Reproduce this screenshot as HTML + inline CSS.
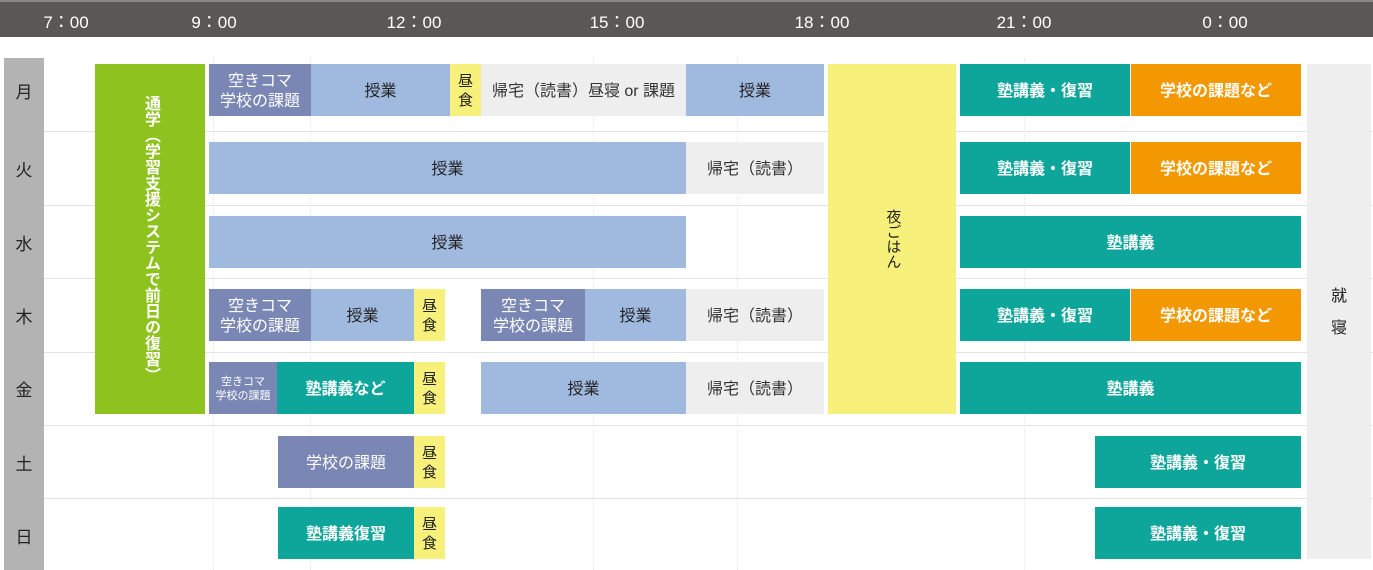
<!DOCTYPE html><html><head><meta charset="utf-8"><style>
body{margin:0;width:1373px;height:570px;position:relative;overflow:hidden;background:#fff;font-family:"Liberation Sans","Noto Sans CJK JP",sans-serif}
.a{position:absolute;display:flex;align-items:center;justify-content:center;text-align:center;box-sizing:border-box;line-height:1.25;padding-top:3px}
.hd{position:absolute;left:0;top:0;width:1373px;height:37px;background:#5a5757;border-top:2px solid #8a8888;box-sizing:border-box}
.t{position:absolute;top:8px;color:#fff;font-size:17px;width:90px;text-align:center;margin-left:-45px}
.s{background:#7a86b4;color:#fff;font-size:16px}
.b{background:#a0b9df;color:#222;font-size:16px}
.y{background:#f7f07a;color:#222;font-size:15px}
.g{background:#eeeeee;color:#333;font-size:16px}
.tl{background:#0ea59b;color:#fff;font-size:16px;font-weight:bold}
.o{background:#f39800;color:#fff;font-size:16px;font-weight:bold}
.d{position:absolute;left:4px;width:40px;color:#222;font-size:17px;text-align:center}
.ln{position:absolute;left:44px;width:1329px;height:1px;background:#e3e3e3}
.v{position:absolute;top:58px;height:512px;border-left:1px dotted #e6e6e6}
</style></head><body>
<div class="hd"></div>
<div class="t" style="left:66px">7：00</div><div class="t" style="left:214px">9：00</div><div class="t" style="left:414px">12：00</div><div class="t" style="left:617px">15：00</div><div class="t" style="left:822px">18：00</div><div class="t" style="left:1024px">21：00</div><div class="t" style="left:1225px">0：00</div>
<div style="position:absolute;left:4px;top:58px;width:40px;height:512px;background:#b3b3b3"></div>
<div class="v" style="left:213px"></div><div class="v" style="left:310px"></div><div class="v" style="left:593px"></div><div class="v" style="left:737px"></div><div class="v" style="left:1024px"></div>
<div class="ln" style="top:131px"></div><div class="ln" style="top:205px"></div><div class="ln" style="top:278px"></div><div class="ln" style="top:352px"></div><div class="ln" style="top:425px"></div><div class="ln" style="top:498px"></div>
<div class="d" style="top:78px">月</div><div class="d" style="top:156px">火</div><div class="d" style="top:230px">水</div><div class="d" style="top:303px">木</div><div class="d" style="top:376px">金</div><div class="d" style="top:450px">土</div><div class="d" style="top:523px">日</div>
<div class="a" style="left:95px;top:64px;width:110px;height:350px;background:#8dc21f;color:#fff;font-size:16px;font-weight:bold;writing-mode:vertical-rl;padding:0">通学（学習支援システムで前日の復習）</div>
<div class="a" style="left:828px;top:64px;width:128px;height:350px;background:#f7f07a;color:#222;font-size:15px;writing-mode:vertical-rl;padding:0">夜ごはん</div>
<div class="a" style="left:1307px;top:64px;width:64px;height:495px;background:#eeeeee;color:#222;font-size:16px;line-height:2">就<br>寝</div>
<div class="a s" style="left:209px;top:64px;width:102px;height:52px">空きコマ<br>学校の課題</div>
<div class="a b" style="left:311px;top:64px;width:139px;height:52px">授業</div>
<div class="a y" style="left:450px;top:64px;width:31px;height:52px">昼<br>食</div>
<div class="a g" style="left:481px;top:64px;width:205px;height:52px">帰宅（読書）昼寝 or 課題</div>
<div class="a b" style="left:686px;top:64px;width:138px;height:52px">授業</div>
<div class="a tl" style="left:960px;top:64px;width:170px;height:52px">塾講義・復習</div>
<div class="a o" style="left:1131px;top:64px;width:170px;height:52px">学校の課題など</div>
<div class="a b" style="left:209px;top:142px;width:477px;height:52px">授業</div>
<div class="a g" style="left:686px;top:142px;width:138px;height:52px">帰宅（読書）</div>
<div class="a tl" style="left:960px;top:142px;width:170px;height:52px">塾講義・復習</div>
<div class="a o" style="left:1131px;top:142px;width:170px;height:52px">学校の課題など</div>
<div class="a b" style="left:209px;top:216px;width:477px;height:52px">授業</div>
<div class="a tl" style="left:960px;top:216px;width:341px;height:52px">塾講義</div>
<div class="a s" style="left:209px;top:289px;width:102px;height:52px">空きコマ<br>学校の課題</div>
<div class="a b" style="left:311px;top:289px;width:103px;height:52px">授業</div>
<div class="a y" style="left:414px;top:289px;width:31px;height:52px">昼<br>食</div>
<div class="a s" style="left:481px;top:289px;width:104px;height:52px">空きコマ<br>学校の課題</div>
<div class="a b" style="left:585px;top:289px;width:101px;height:52px">授業</div>
<div class="a g" style="left:686px;top:289px;width:138px;height:52px">帰宅（読書）</div>
<div class="a tl" style="left:960px;top:289px;width:170px;height:52px">塾講義・復習</div>
<div class="a o" style="left:1131px;top:289px;width:170px;height:52px">学校の課題など</div>
<div class="a s" style="left:209px;top:362px;width:68px;height:52px;font-size:11px">空きコマ<br>学校の課題</div>
<div class="a tl" style="left:277px;top:362px;width:137px;height:52px">塾講義など</div>
<div class="a y" style="left:414px;top:362px;width:31px;height:52px">昼<br>食</div>
<div class="a b" style="left:481px;top:362px;width:205px;height:52px">授業</div>
<div class="a g" style="left:686px;top:362px;width:138px;height:52px">帰宅（読書）</div>
<div class="a tl" style="left:960px;top:362px;width:341px;height:52px">塾講義</div>
<div class="a s" style="left:278px;top:436px;width:136px;height:52px">学校の課題</div>
<div class="a y" style="left:414px;top:436px;width:31px;height:52px">昼<br>食</div>
<div class="a tl" style="left:1095px;top:436px;width:206px;height:52px">塾講義・復習</div>
<div class="a tl" style="left:278px;top:507px;width:136px;height:52px">塾講義復習</div>
<div class="a y" style="left:414px;top:507px;width:31px;height:52px">昼<br>食</div>
<div class="a tl" style="left:1095px;top:507px;width:206px;height:52px">塾講義・復習</div>
</body></html>
